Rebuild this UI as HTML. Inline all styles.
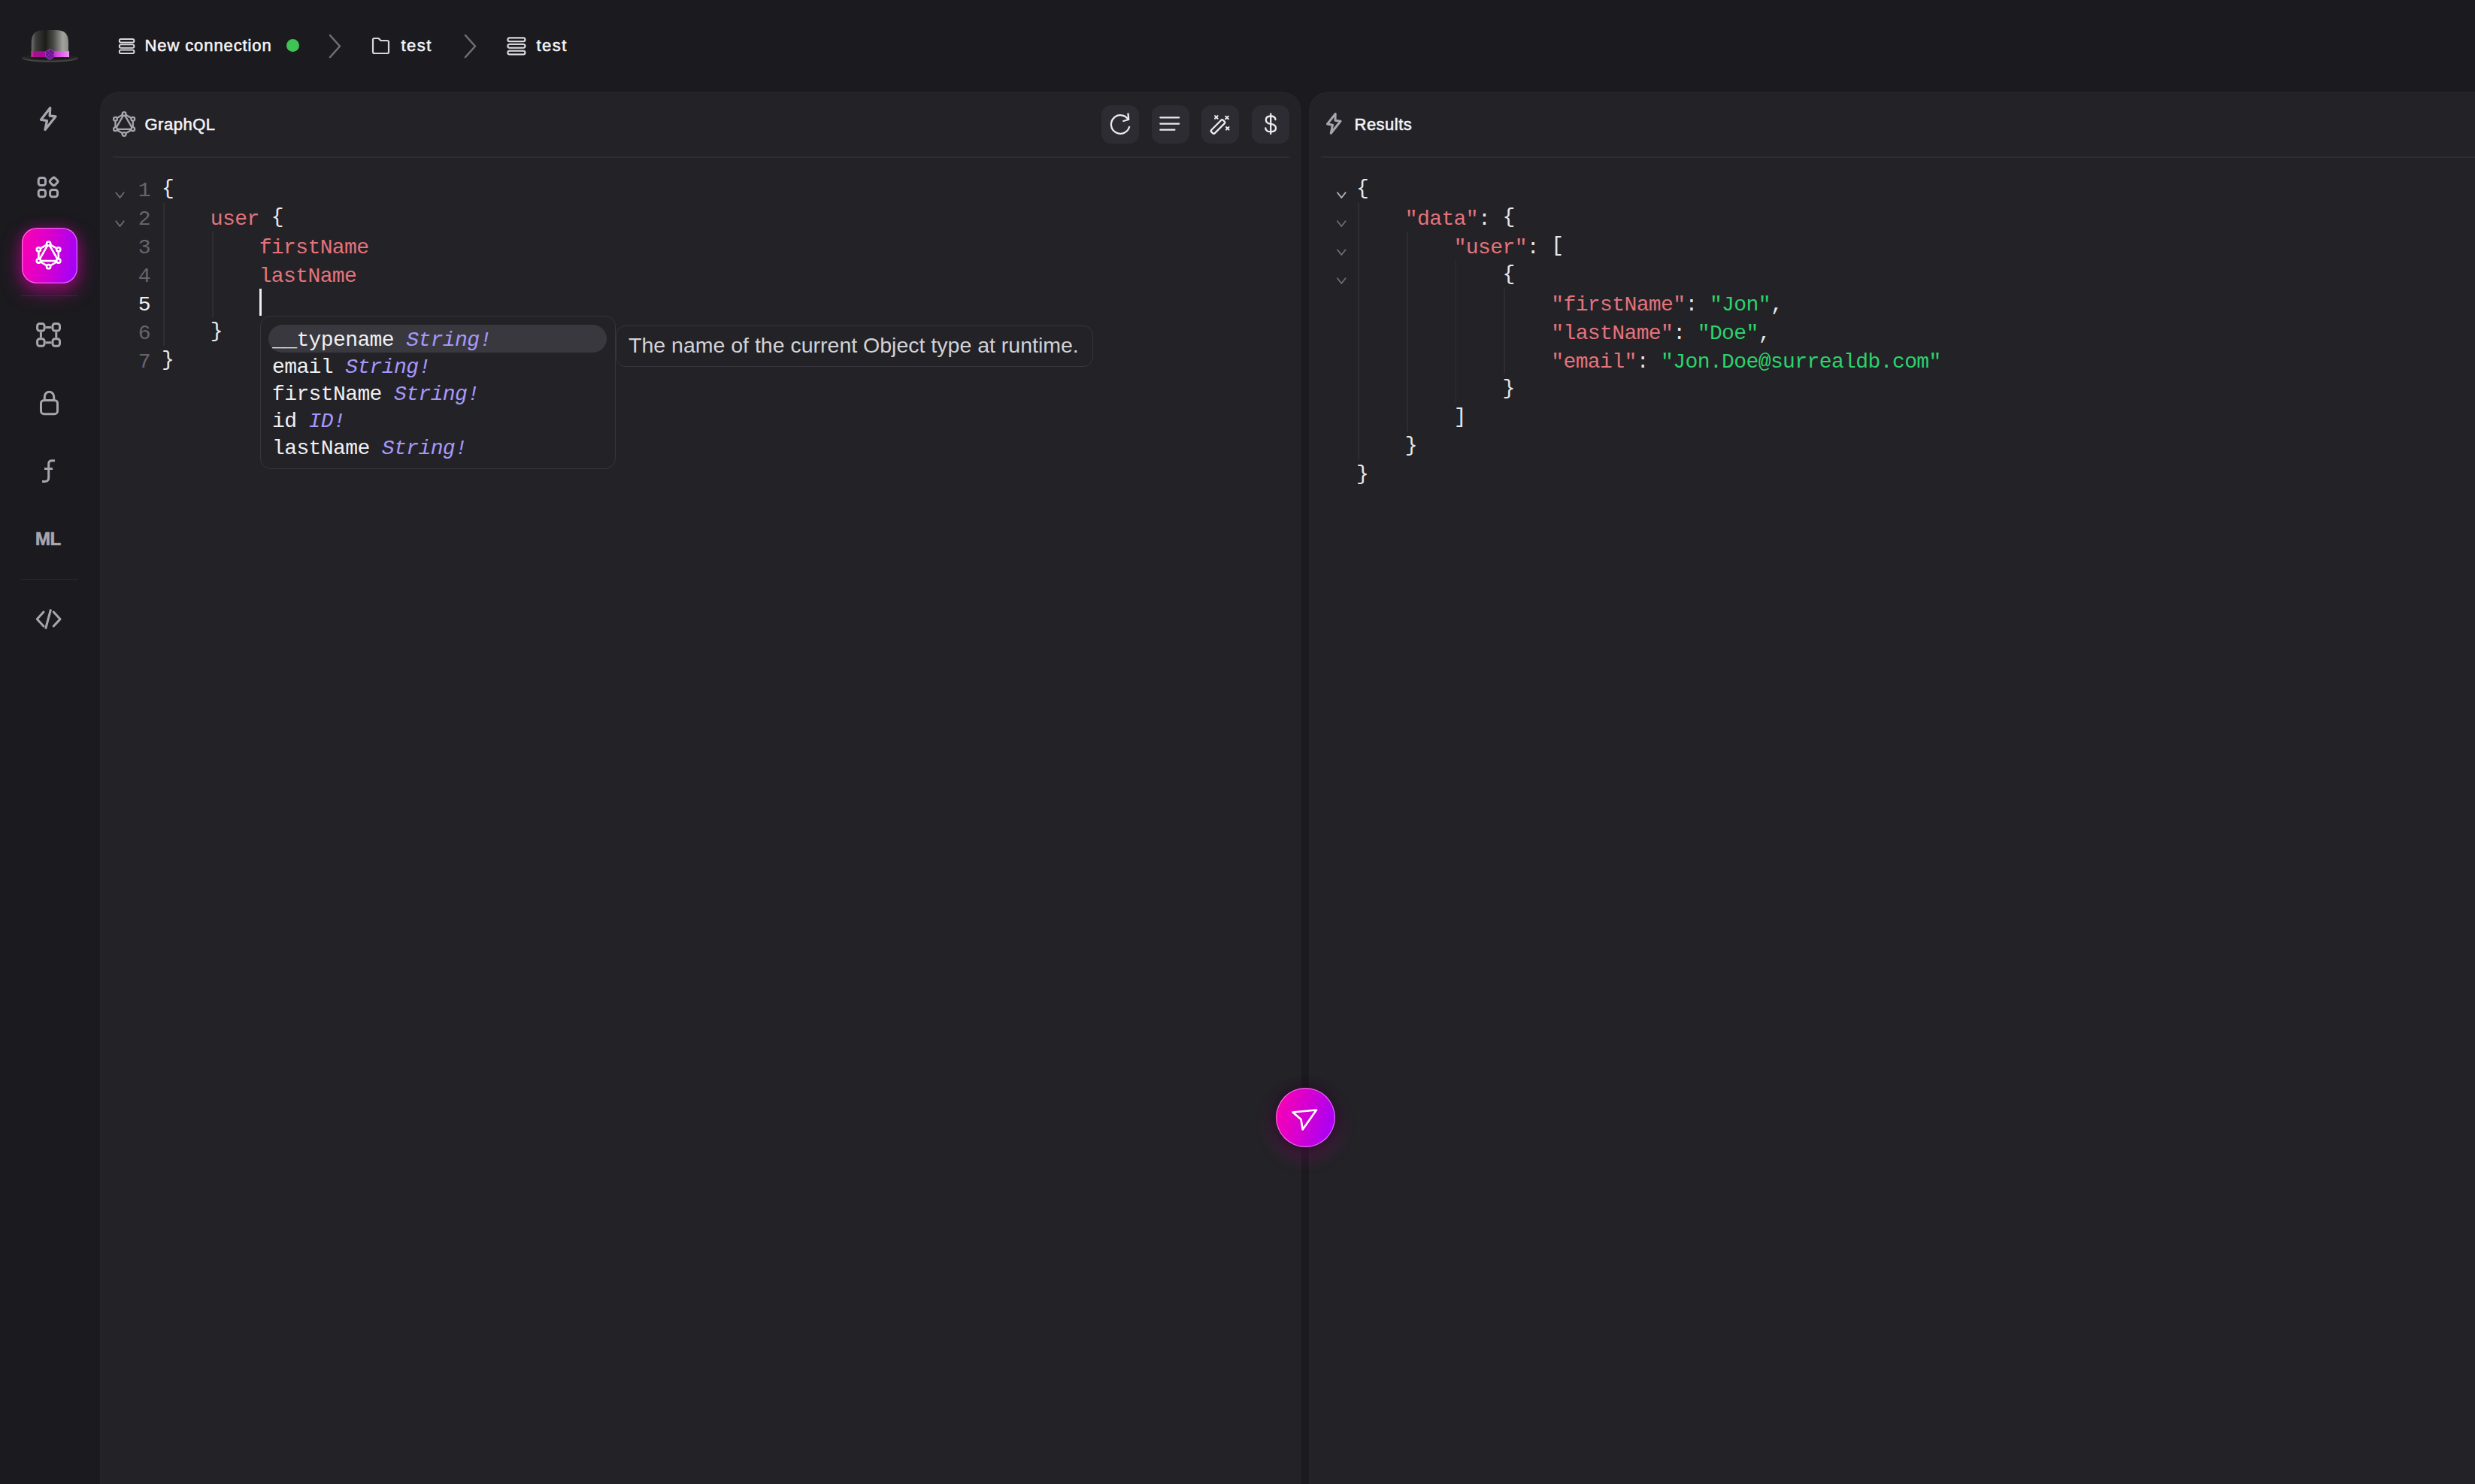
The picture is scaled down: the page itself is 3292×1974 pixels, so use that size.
<!DOCTYPE html>
<html><head><meta charset="utf-8">
<style>
html,body{margin:0;padding:0;width:3292px;height:1974px;overflow:hidden;background:#1b1a1f;font-family:"Liberation Sans",sans-serif;}
*{box-sizing:border-box;}
.abs{position:absolute;}
.sans{font-family:"Liberation Sans",sans-serif;}
.mono{font-family:"Liberation Mono",monospace;}
.panel{position:absolute;background:#232227;border-radius:25px 25px 0 0;box-shadow:inset 2px 2px 0 rgba(255,255,255,0.012);}
.sep{position:absolute;height:1.5px;background:#2d2c32;}
.tbtn{position:absolute;top:140px;width:50px;height:51px;border-radius:13px;background:#2d2c32;}
.code{position:absolute;white-space:pre;font-family:"Liberation Mono",monospace;font-size:28px;letter-spacing:-0.6px;line-height:38px;color:#e8e8ea;}
.k{color:#e5737c;}
.s{color:#2bd46c;}
.p{color:#e8e8ea;}
.ty{color:#a698fa;font-style:italic;}
.ln{position:absolute;font-family:"Liberation Mono",monospace;font-size:28px;letter-spacing:-0.6px;line-height:38px;color:#66656c;text-align:right;white-space:pre;}
.b{position:relative;top:-3px;}
.guide{position:absolute;width:1.5px;background:#2e2d33;}
</style></head>
<body>
<!-- TOP BAR -->
<svg class="abs" style="left:24px;top:34px" width="86" height="54" viewBox="0 0 86 54">
  <defs>
    <linearGradient id="dome" x1="0" y1="0" x2="1" y2="0">
      <stop offset="0" stop-color="#707070"/><stop offset="0.12" stop-color="#3c3c3a"/><stop offset="0.38" stop-color="#1c1c1a"/><stop offset="0.6" stop-color="#4a4a46"/><stop offset="0.85" stop-color="#a2a29e"/><stop offset="1" stop-color="#8c8c8a"/>
    </linearGradient>
    <linearGradient id="band" x1="0" y1="0" x2="1" y2="0">
      <stop offset="0" stop-color="#d04090"/><stop offset="0.08" stop-color="#a8108a"/><stop offset="0.4" stop-color="#b000a8"/><stop offset="0.7" stop-color="#d848e0"/><stop offset="1" stop-color="#f090f8"/>
    </linearGradient>
    <radialGradient id="brim" cx="0.5" cy="0.3" r="0.6">
      <stop offset="0" stop-color="#141412"/><stop offset="0.75" stop-color="#242422"/><stop offset="1" stop-color="#484846"/>
    </radialGradient>
  </defs>
  <ellipse cx="42.5" cy="43.2" rx="37.5" ry="5.4" fill="url(#brim)"/>
  <path d="M17.8 36 V24 C17.8 9 24 6 36 6 H49 C61 6 67 9 67 24 V36 Z" fill="url(#dome)"/>
  <rect x="17.5" y="34.2" width="50.5" height="8" fill="url(#band)"/>
  <rect x="18" y="42.2" width="49.5" height="1.6" fill="#0c0c0c" opacity="0.7"/>
  <path d="M42.2 31 L48 34.6 L48 41.8 L42.2 45.4 L36.4 41.8 L36.4 34.6 Z" fill="#5a1490" stroke="#b040c0" stroke-width="0.8"/>
  <path d="M38 36 L46 44 M36.8 39 L43 45 M39.5 33 L48 41.5 M46 34 L37 43 M48 37 L40 45 M43 32 L36.6 38.5" stroke="#c03aa8" stroke-width="0.7" opacity="0.8"/>
</svg>

<!-- breadcrumbs -->
<svg class="abs" style="left:150px;top:40px" width="40" height="40" viewBox="150 40 40 40" fill="none" stroke="#d8d8dc" stroke-width="2">
  <rect x="158.8" y="52" width="19.6" height="4.4" rx="2.2"/><rect x="158.8" y="59.3" width="19.6" height="4.4" rx="2.2"/><rect x="158.8" y="66.6" width="19.6" height="4.4" rx="2.2"/>
</svg>
<div class="abs sans" style="left:192.5px;top:46px;font-size:22px;color:#f4f4f6;line-height:30px;letter-spacing:0.9px;-webkit-text-stroke:0.55px #f4f4f6;">New connection</div>
<div class="abs" style="left:381px;top:52px;width:17px;height:17px;border-radius:50%;background:#3dc455;"></div>
<svg class="abs" style="left:436px;top:44px" width="20" height="35" viewBox="0 0 20 35" fill="none" stroke="#6f6e75" stroke-width="2.6" stroke-linecap="round" stroke-linejoin="round">
  <path d="M3 3 L16 17.5 L3 32"/>
</svg>
<svg class="abs" style="left:494px;top:49px" width="26" height="24" viewBox="0 0 26 24" fill="none" stroke="#d8d8dc" stroke-width="2.2" stroke-linejoin="round">
  <path d="M2 4 Q2 2 4 2 L9.5 2 L12.5 5 L21 5 Q23 5 23 7 L23 20 Q23 22 21 22 L4 22 Q2 22 2 20 Z"/>
</svg>
<div class="abs sans" style="left:533.5px;top:46px;font-size:22px;color:#f4f4f6;line-height:30px;letter-spacing:1.5px;-webkit-text-stroke:0.55px #f4f4f6;">test</div>
<svg class="abs" style="left:616px;top:44px" width="20" height="35" viewBox="0 0 20 35" fill="none" stroke="#6f6e75" stroke-width="2.6" stroke-linecap="round" stroke-linejoin="round">
  <path d="M3 3 L16 17.5 L3 32"/>
</svg>
<svg class="abs" style="left:665px;top:40px" width="45" height="45" viewBox="665 40 45 45" fill="none" stroke="#d8d8dc" stroke-width="2.2">
  <rect x="675.4" y="50.3" width="23" height="4.8" rx="2.4"/><rect x="675.4" y="58.9" width="23" height="4.8" rx="2.4"/><rect x="675.4" y="67.6" width="23" height="4.8" rx="2.4"/>
</svg>
<div class="abs sans" style="left:713.5px;top:46px;font-size:22px;color:#f4f4f6;line-height:30px;letter-spacing:1.5px;-webkit-text-stroke:0.55px #f4f4f6;">test</div>

<!-- SIDEBAR -->
<!-- sidebar icons -->
<svg class="abs" style="left:0;top:120px" width="133" height="740" viewBox="0 120 133 740" fill="none" stroke="#a7a6ae" stroke-width="3" stroke-linecap="round" stroke-linejoin="round">
  <path d="M66.7 143.5 L54.5 159.2 L62.5 160.6 L60 172.5 L74 155 L66.2 154 Z" stroke-width="3.3"/>
  <rect x="51.2" y="236.5" width="9.3" height="10" rx="3"/>
  <rect x="51.2" y="252.5" width="9.3" height="9.3" rx="3"/>
  <rect x="66.6" y="252.5" width="9.9" height="9.3" rx="3"/>
  <rect x="67.2" y="237" width="8.8" height="8.8" rx="2.5" transform="rotate(45 71.6 241.4)"/>
  <rect x="49.6" y="430.5" width="9.5" height="9.5" rx="3"/>
  <rect x="70" y="430.5" width="9.5" height="9.5" rx="3"/>
  <rect x="49.6" y="450.8" width="9.5" height="9.5" rx="3"/>
  <rect x="70" y="450.8" width="9.5" height="9.5" rx="3"/>
  <path d="M60.5 435.6 H68.5 M60.5 455.8 H68.5 M54.4 441.5 V449.3 M74.8 441.5 V449.3" stroke-linecap="butt"/>
  <rect x="54.5" y="532.4" width="22" height="18.3" rx="4"/>
  <path d="M59.3 532 V527.5 A6.2 6.2 0 0 1 71.7 527.5 V532"/>
  <path d="M73 612.7 H69 Q64.7 612.7 64.7 617 V635.5 Q64.7 640.5 59.5 640.5 H56" stroke-linecap="butt"/>
  <path d="M59 623.5 H70" stroke-linecap="butt"/>
  <path d="M58 814 L49.3 823.6 L58 833 M71.2 814 L80 823.6 L71.2 833"/>
  <path d="M67.6 810.5 L60.6 836.5" stroke-linecap="butt"/>
</svg>
<div class="abs sans" style="left:47px;top:702px;font-size:24px;font-weight:bold;color:#a7a6ae;line-height:30px;letter-spacing:-0.5px;-webkit-text-stroke:0.7px #a7a6ae;">ML</div>
<div class="abs" style="left:28px;top:393px;width:76px;height:1px;background:rgba(255,255,255,0.08);"></div>
<div class="abs" style="left:28px;top:770px;width:76px;height:1px;background:rgba(255,255,255,0.07);"></div>
<!-- active graphql button -->
<div class="abs" style="left:29px;top:303px;width:74px;height:74px;border-radius:20px;background:linear-gradient(100deg,#ff00b0 0%,#d400d0 50%,#9c00ff 100%);box-shadow:0 10px 24px 2px rgba(230,0,170,0.5), 0 0 16px 2px rgba(200,0,170,0.22), inset 0 0 0 1.3px rgba(255,170,255,0.6);"></div>
<svg class="abs" style="left:29px;top:303px" width="74" height="74" viewBox="29 303 74 74" fill="none" stroke="#ffffff" stroke-width="2.6" stroke-linejoin="round">
  <path d="M64.6 324.1 L51.4 331.8 L51.4 347 L64.6 354.7 L77.8 347 L77.8 331.8 Z"/>
  <path d="M64.6 324.1 L51.4 347 L77.8 347 Z"/>
  <g fill="#c400d4"><circle cx="64.6" cy="324.1" r="2.6"/><circle cx="51.4" cy="331.8" r="2.6"/><circle cx="77.8" cy="331.8" r="2.6"/><circle cx="51.4" cy="347" r="2.6"/><circle cx="77.8" cy="347" r="2.6"/><circle cx="64.6" cy="354.7" r="2.6"/></g>
</svg>

<!-- LEFT PANEL -->
<div class="panel" style="left:133px;top:122px;width:1598px;height:1852px;"></div>
<div class="sep" style="left:150px;top:208px;width:1565px;"></div>
<svg class="abs" style="left:133px;top:122px" width="70" height="80" viewBox="133 122 70 80" fill="none" stroke="#a7a6ae" stroke-width="2.3" stroke-linejoin="round">
  <path d="M165.1 151.6 L153.5 158.3 L153.5 171.8 L165.1 178.5 L176.8 171.8 L176.8 158.3 Z"/>
  <path d="M165.1 151.6 L153.5 171.8 L176.8 171.8 Z"/>
  <g fill="#222127"><circle cx="165.1" cy="151.6" r="2.4"/><circle cx="153.5" cy="158.3" r="2.4"/><circle cx="176.8" cy="158.3" r="2.4"/><circle cx="153.5" cy="171.8" r="2.4"/><circle cx="176.8" cy="171.8" r="2.4"/><circle cx="165.1" cy="178.5" r="2.4"/></g>
</svg>
<div class="abs sans" style="left:192.5px;top:151px;font-size:22px;color:#f4f4f6;line-height:30px;letter-spacing:0.5px;-webkit-text-stroke:0.55px #f4f4f6;">GraphQL</div>
<div class="tbtn" style="left:1465px"></div>
<div class="tbtn" style="left:1532px"></div>
<div class="tbtn" style="left:1598px"></div>
<div class="tbtn" style="left:1665px"></div>
<svg class="abs" style="left:1440px;top:130px" width="290" height="70" viewBox="1440 130 290 70" fill="none" stroke="#ececee" stroke-width="2.3" stroke-linecap="round" stroke-linejoin="round">
  <path d="M1500.6 158.9 A12.3 12.3 0 1 0 1502.1 168.8"/>
  <path d="M1500.5 151.3 L1501.2 159 L1494.3 161"/>
  <path d="M1543.3 156.3 H1568.2 M1543.3 164.6 H1568.2 M1543.3 172.7 H1562.4"/>
  <rect x="1609" y="165.5" width="22" height="6.2" rx="2" transform="rotate(-45 1620 168.6)"/>
  <path d="M1616 154.1 L1619.6 157.7 M1619.6 154.1 L1616 157.7 M1630.2 154.7 L1633.8 158.3 M1633.8 154.7 L1630.2 158.3 M1630.9 169 L1634.5 172.6 M1634.5 169 L1630.9 172.6" stroke-width="2"/>
  <path d="M1690.2 151.5 V178" />
  <path d="M1696.5 159 Q1696 154.5 1690.2 154.5 Q1683.8 154.5 1683.8 159.5 Q1683.8 164 1690.2 164.8 Q1697 165.6 1697 170.5 Q1697 175.2 1690.2 175.2 Q1683.6 175.2 1683.3 170.5"/>
</svg>

<!-- RIGHT PANEL -->
<div class="panel" style="left:1741px;top:122px;width:1551px;height:1852px;border-radius:25px 0 0 0;"></div>
<div class="sep" style="left:1757px;top:208px;width:1535px;"></div>
<svg class="abs" style="left:1755px;top:140px" width="40" height="50" viewBox="1755 140 40 50" fill="none" stroke="#a7a6ae" stroke-width="3" stroke-linecap="round" stroke-linejoin="round">
  <path d="M1776.2 151.3 L1765.5 165 L1772.5 166.2 L1770.3 177.3 L1783 161.2 L1776 160.3 Z"/>
</svg>
<div class="abs sans" style="left:1801.5px;top:151px;font-size:22px;color:#f4f4f6;line-height:30px;letter-spacing:0.5px;-webkit-text-stroke:0.55px #f4f4f6;">Results</div>

<!-- EDITOR -->
<div class="ln" style="left:160px;top:235px;width:40px;">1
2
3
4
<span style="color:#f0f0f2">5</span>
6
7</div>
<div class="code" style="left:215px;top:235px;"><span class="b">{</span>
    <span class="k">user</span> <span class="b">{</span>
        <span class="k">firstName</span>
        <span class="k">lastName</span>

    <span class="b">}</span>
<span class="b">}</span></div>


<!-- editor gutter folds & guides -->
<svg class="abs" style="left:140px;top:240px" width="40" height="80" viewBox="140 240 40 80" fill="none" stroke="#6e6d74" stroke-width="1.8" stroke-linecap="round" stroke-linejoin="round">
  <path d="M154.3 256.2 L159.5 263 L164.7 256.2"/>
  <path d="M154.3 294.2 L159.5 301 L164.7 294.2"/>
</svg>
<div class="guide" style="left:217px;top:270px;height:190px;"></div>
<div class="guide" style="left:282px;top:308px;height:114px;"></div>
<div class="abs" style="left:345px;top:384px;width:3px;height:35.6px;background:#f0eef4;"></div>
<!-- RESULTS -->
<div class="code" style="left:1804px;top:235px;"><span class="b">{</span>
    <span class="k">"data"</span>: <span class="b">{</span>
        <span class="k">"user"</span>: <span class="b">[</span>
            <span class="b">{</span>
                <span class="k">"firstName"</span>: <span class="s">"Jon"</span>,
                <span class="k">"lastName"</span>: <span class="s">"Doe"</span>,
                <span class="k">"email"</span>: <span class="s">"Jon.Doe@surrealdb.com"</span>
            <span class="b">}</span>
        <span class="b">]</span>
    <span class="b">}</span>
<span class="b">}</span></div>


<!-- results gutter -->
<svg class="abs" style="left:1770px;top:240px" width="30" height="150" viewBox="1770 240 30 150" fill="none" stroke="#6e6d74" stroke-width="1.8" stroke-linecap="round" stroke-linejoin="round">
  <path d="M1779 256.2 L1784.3 263 L1789.6 256.2" stroke="#b8b7bd"/>
  <path d="M1779 294.2 L1784.3 301 L1789.6 294.2"/>
  <path d="M1779 332.2 L1784.3 339 L1789.6 332.2"/>
  <path d="M1779 370.2 L1784.3 377 L1789.6 370.2"/>
</svg>
<div class="guide" style="left:1806px;top:270px;height:342px;"></div>
<div class="guide" style="left:1871px;top:308px;height:266px;"></div>
<div class="guide" style="left:1935.5px;top:346px;height:190px;"></div>
<div class="guide" style="left:2000px;top:384px;height:114px;"></div>

<!-- autocomplete popup -->
<div class="abs" style="left:346px;top:420px;width:473px;height:204px;border-radius:14px;border:1.5px solid #37363c;background:#232227;"></div>
<div class="abs" style="left:357px;top:431.5px;width:450px;height:37px;border-radius:18.5px;background:#39383e;"></div>
<div class="code" style="left:362px;top:434.7px;line-height:36px;color:#f0f0f2;">__typename <span class="ty">String!</span>
email <span class="ty">String!</span>
firstName <span class="ty">String!</span>
id <span class="ty">ID!</span>
lastName <span class="ty">String!</span></div>
<!-- tooltip -->
<div class="abs" style="left:819px;top:433px;width:635px;height:55px;border-radius:13px;border:1.5px solid #37363c;background:#232227;"></div>
<div class="abs sans" style="left:836px;top:443px;font-size:28.5px;line-height:32px;color:#d2d2d6;white-space:pre;">The name of the current Object type at runtime.</div>
<!-- SEND BUTTON -->
<div class="abs" style="left:1697px;top:1447px;width:79px;height:79px;border-radius:50%;background:linear-gradient(105deg,#ff00b0 0%,#d200d2 50%,#a000ff 100%);box-shadow:0 0 8px 8px rgba(22,16,28,0.42), 0 10px 22px 5px rgba(200,0,150,0.24), inset 0 0 0 1.2px rgba(255,170,255,0.6);"></div>

<svg class="abs" style="left:1697px;top:1447px" width="79" height="79" viewBox="1697 1447 79 79" fill="none" stroke="#ffffff" stroke-width="2.6" stroke-linejoin="round">
  <path d="M1719.5 1479.5 L1751 1476.5 L1732.7 1502.5 L1730.5 1489 Z"/>
</svg>
</body></html>
